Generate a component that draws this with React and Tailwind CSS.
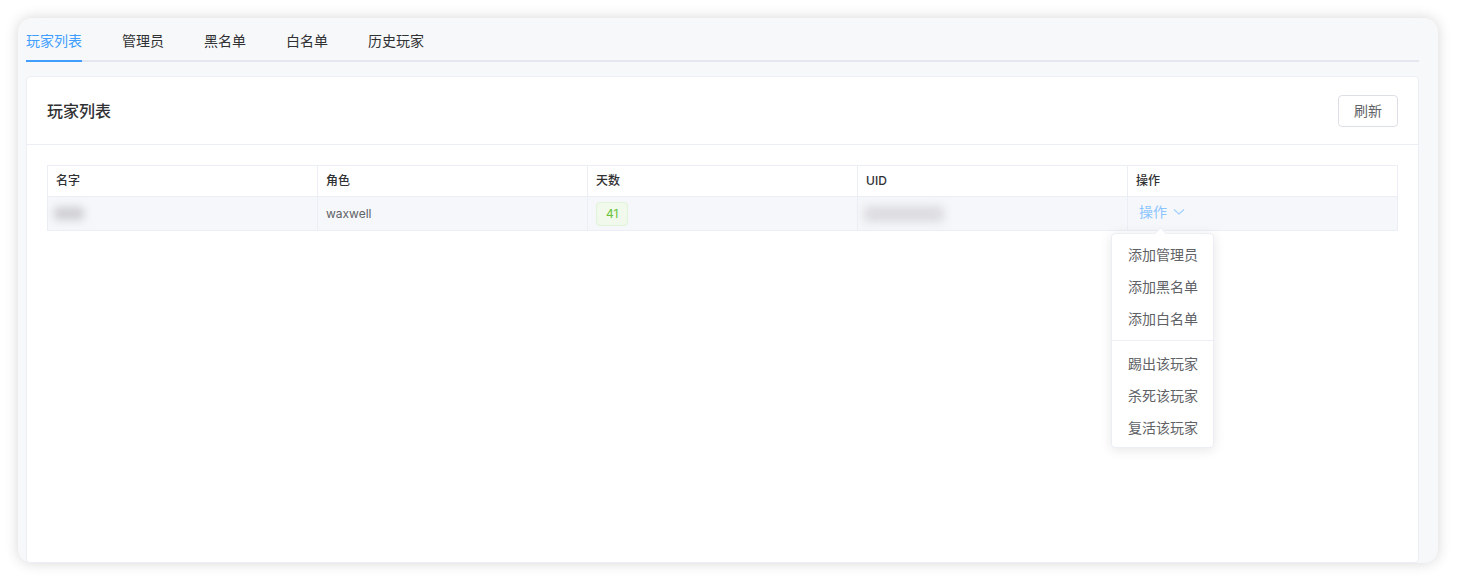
import React from "react";

const font = { fontFamily: "Inter, 'Noto Sans CJK SC', sans-serif" };

function Chevron() {
  return (
    <svg width="12" height="8" viewBox="0 0 12 8" fill="none" className="ml-[6px] mt-[1px]">
      <polyline points="1,1.5 6,6 11,1.5" stroke="#a0cfff" strokeWidth="1.1" fill="none" />
    </svg>
  );
}

export default function App() {
  const tabs = ["玩家列表", "管理员", "黑名单", "白名单", "历史玩家"];
  const cols = ["名字", "角色", "天数", "UID", "操作"];
  const items1 = ["添加管理员", "添加黑名单", "添加白名单"];
  const items2 = ["踢出该玩家", "杀死该玩家", "复活该玩家"];
  return (
    <div className="w-[1457px] h-[582px] bg-white pt-[18px] pl-[18px] pr-[19px]" style={font}>
      <div className="h-[545px] rounded-[14px] bg-[#f7f8fa] shadow-[0_0_14px_rgba(0,0,0,0.16)] overflow-hidden pl-2 pr-[19px] pt-[4px] flex flex-col">
        {/* tabs */}
        <div className="h-10 flex items-stretch border-b-2 border-[#e4e7ed] shrink-0">
          {tabs.map((t, i) => (
            <div
              key={t}
              className={
                "relative flex items-center text-[14px] leading-[40px] " +
                (i === 0 ? "pr-5 text-[#409eff]" : "px-5 text-[#303133]")
              }
            >
              {t}
              {i === 0 && (
                <div className="absolute left-0 right-5 bottom-[-2px] h-[2px] bg-[#409eff]" />
              )}
            </div>
          ))}
        </div>
        {/* card */}
        <div className="mt-[14px] flex-1 bg-white border border-[#ebeef5] rounded-[4px] flex flex-col">
          <div className="h-[68px] px-5 flex items-center justify-between border-b border-[#ebeef5]">
            <div className="text-[16px] leading-[22px] text-[#303133] font-medium">玩家列表</div>
            <button className="h-8 w-[60px] border border-[#dcdfe6] rounded-[4px] text-[14px] text-[#606266] bg-white flex items-center justify-center">
              刷新
            </button>
          </div>
          <div className="p-5">
            <div className="relative">
              <div className="border border-[#ebeef5] border-r-0 border-b-0">
                <div className="grid grid-cols-5 h-[31px]">
                  {cols.map((c) => (
                    <div
                      key={c}
                      className="border-r border-b border-[#ebeef5] pl-2 flex items-center text-[12px] text-[#303133] font-medium"
                    >
                      {c}
                    </div>
                  ))}
                </div>
                <div className="grid grid-cols-5 h-[34px] bg-[#f5f7fa]">
                  <div className="border-r border-b border-[#ebeef5] pl-[6px] flex items-center">
                    <div className="w-[30px] h-[13px] bg-[#cfcfd3] blur-[4px] rounded" />
                  </div>
                  <div className="border-r border-b border-[#ebeef5] pl-2 flex items-center text-[12px] text-[#606266]">
                    waxwell
                  </div>
                  <div className="border-r border-b border-[#ebeef5] pl-2 flex items-center">
                    <div className="h-6 px-[9px] rounded-[4px] bg-[#f0f9eb] border border-[#e1f3d8] text-[#67c23a] text-[12px] flex items-center">
                      41
                    </div>
                  </div>
                  <div className="border-r border-b border-[#ebeef5] pl-[6px] flex items-center">
                    <div className="w-[80px] h-[16px] bg-[#dcdce0] blur-[5px] rounded" />
                  </div>
                  <div className="border-r border-b border-[#ebeef5] pl-[11px] flex items-center">
                    <div className="flex items-center text-[14px] text-[#8cc5ff] leading-none -mt-[4px]">
                      操作
                      <Chevron />
                    </div>
                  </div>
                </div>
              </div>
              {/* dropdown menu */}
              <div className="absolute left-[1064px] top-[68px] w-[103px] bg-white border border-[#ebeef5] rounded-[4px] shadow-[0_2px_12px_0_rgba(0,0,0,0.1)] py-1 z-10">
                <div className="absolute left-[44px] -top-[5px] w-[9px] h-[9px] bg-white border-l border-t border-[#ebeef5] rotate-45" />
                {items1.map((t) => (
                  <div key={t} className="h-8 px-4 flex items-center text-[14px] text-[#606266] whitespace-nowrap">
                    {t}
                  </div>
                ))}
                <div className="mt-[6px] border-t border-[#ebeef5] pt-[6px]">
                  {items2.map((t) => (
                    <div key={t} className="h-8 px-4 flex items-center text-[14px] text-[#606266] whitespace-nowrap">
                      {t}
                    </div>
                  ))}
                </div>
              </div>
            </div>
          </div>
        </div>
      </div>
    </div>
  );
}
